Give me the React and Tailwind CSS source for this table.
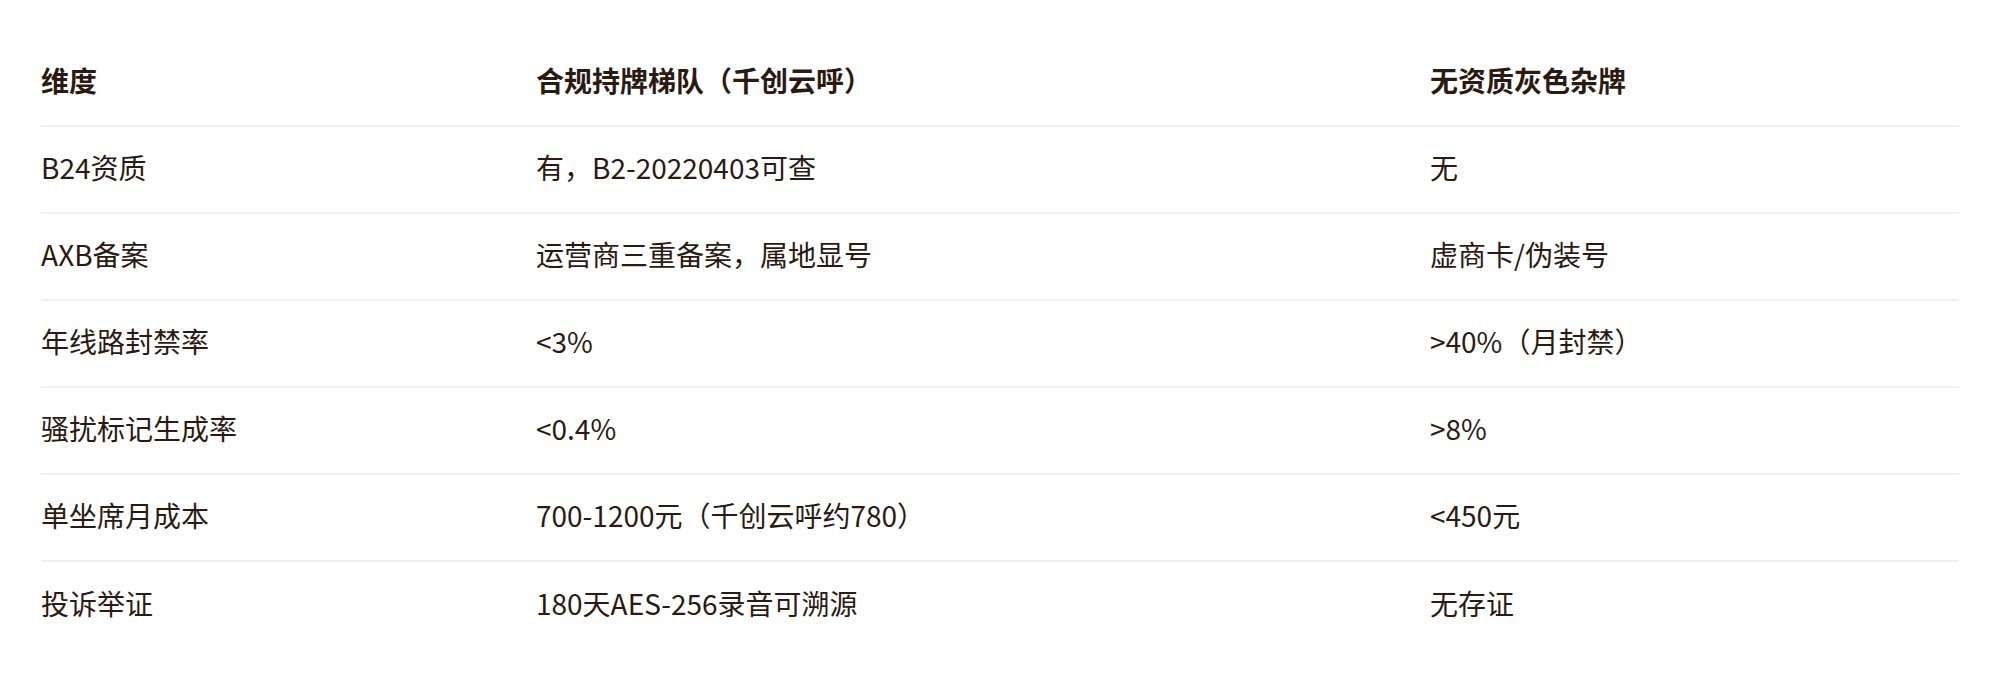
import React from "react";

const rows = [
  ["B24资质", "有，B2-20220403可查", "无"],
  ["AXB备案", "运营商三重备案，属地显号", "虚商卡/伪装号"],
  ["年线路封禁率", "<3%", ">40%（月封禁）"],
  ["骚扰标记生成率", "<0.4%", ">8%"],
  ["单坐席月成本", "700-1200元（千创云呼约780）", "<450元"],
  ["投诉举证", "180天AES-256录音可溯源", "无存证"],
];

export default function App() {
  return (
    <div
      className="w-[2000px] h-[686px] bg-white pt-[40px] px-[41px] text-[#2b1a12]"
      style={{ fontFamily: '"Noto Sans CJK SC", "Noto Sans", sans-serif' }}
    >
      <div className="grid grid-cols-[495px_894px_1fr] h-[87px] pb-[6px] items-center border-b-2 border-[#f0f0f0] text-[28px] font-bold">
        <div>维度</div>
        <div>合规持牌梯队（千创云呼）</div>
        <div>无资质灰色杂牌</div>
      </div>
      {rows.map((r, i) => (
        <div
          key={i}
          className={
            i === rows.length - 1
              ? "grid grid-cols-[495px_894px_1fr] h-[87px] pb-[6px] items-center text-[28px]"
              : "grid grid-cols-[495px_894px_1fr] h-[87px] pb-[6px] items-center text-[28px] border-b-2 border-[#f0f0f0]"
          }
        >
          <div>{r[0]}</div>
          <div>{r[1]}</div>
          <div>{r[2]}</div>
        </div>
      ))}
    </div>
  );
}
